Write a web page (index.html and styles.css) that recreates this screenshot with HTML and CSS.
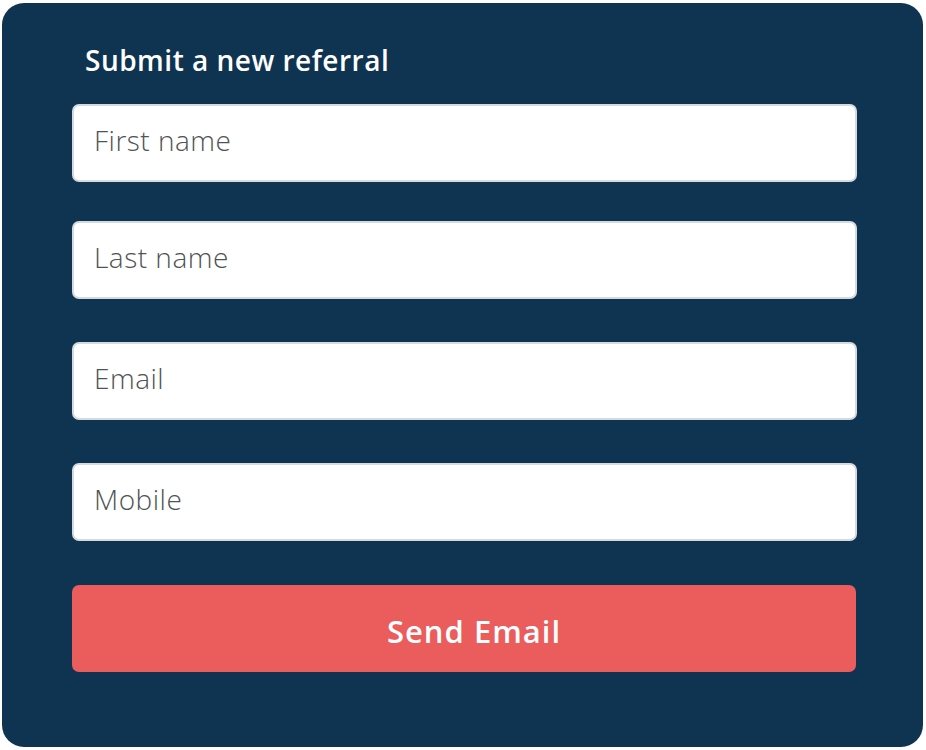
FILE: index.html
```html
<!DOCTYPE html>
<html>
<head>
<meta charset="utf-8">
<link rel="stylesheet" href="styles.css">
</head>
<body>
<div class="panel">
  <h1 class="title">Submit a new referral</h1>
  <form class="form">
    <input class="field field-first" type="text" placeholder="First name">
    <input class="field" type="text" placeholder="Last name">
    <input class="field" type="email" placeholder="Email">
    <input class="field" type="tel" placeholder="Mobile">
    <button class="send" type="button">Send Email</button>
  </form>
</div>
</body>
</html>
```
FILE: styles.css
```css
html, body {
  margin: 0;
  padding: 0;
  background: #ffffff;
}
.panel {
  box-sizing: border-box;
  margin: 3px 0 0 2px;
  width: 921px;
  height: 744px;
  border-radius: 22px;
  background: #0f3451;
  padding: 0 67px 0 70px;
  font-family: "Open Sans", sans-serif;
}
.title {
  margin: 0;
  padding: 37px 0 0 13px;
  font-size: 28px;
  line-height: 40px;
  font-weight: 600;
  color: #ffffff;
  letter-spacing: 0.5px;
}
.form {
  display: flex;
  flex-direction: column;
  margin-top: 24px;
}
.field {
  box-sizing: border-box;
  height: 78px;
  width: 785px;
  margin: 0 0 43px 0;
  border: 2px solid #d5dadf;
  border-radius: 7px;
  background: #ffffff;
  padding: 0 20px 7px 20px;
  font-family: "Open Sans", sans-serif;
  font-size: 28px;
  font-weight: 300;
  letter-spacing: 0.5px;
  color: #444;
  outline: none;
}
.field-first {
  margin-bottom: 39px;
}
.field::placeholder {
  color: #505356;
  opacity: 1;
}
.send {
  margin-top: 1px;
  height: 87px;
  width: 784px;
  border: none;
  border-radius: 7px;
  background: #eb5c5c;
  color: #ffffff;
  padding: 4px 0 0 20px;
  font-family: "Open Sans", sans-serif;
  font-size: 31px;
  font-weight: 600;
  letter-spacing: 1px;
  cursor: pointer;
}
```
